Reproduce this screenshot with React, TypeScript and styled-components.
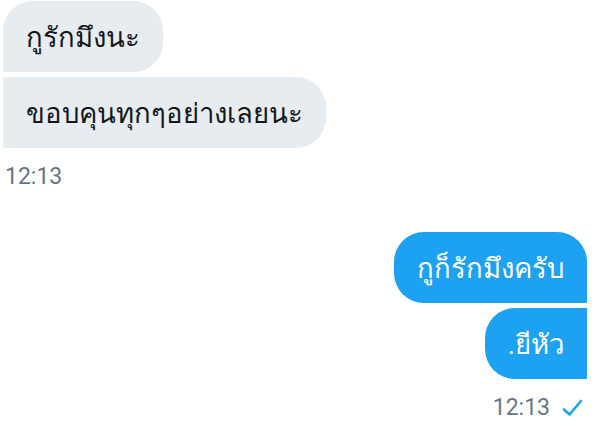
import React from "react";
import styled, { createGlobalStyle } from "styled-components";

const Global = createGlobalStyle`
  html, body { margin: 0; padding: 0; background: #ffffff; }
  body { font-family: Roboto, "Noto Sans", "DejaVu Sans", sans-serif; }
`;

const Page = styled.div`
  width: 611px;
  height: 447px;
  box-sizing: border-box;
  padding: 1px 24px 0 3px;
  display: flex;
  flex-direction: column;
`;

const Group = styled.div<{ $mine?: boolean }>`
  display: flex;
  flex-direction: column;
  align-items: ${(p) => (p.$mine ? "flex-end" : "flex-start")};
  gap: 5px;
  margin-top: ${(p) => (p.$mine ? "42px" : "0")};
`;

type Pos = "first" | "last";

const Bubble = styled.div<{ $mine?: boolean; $pos: Pos }>`
  box-sizing: border-box;
  height: 71px;
  display: flex;
  align-items: center;
  padding: 0 23px;
  font-size: 27.5px;
  color: ${(p) => (p.$mine ? "#ffffff" : "#14171a")};
  background: ${(p) => (p.$mine ? "#1da1f2" : "#e6ecf0")};
  border-radius: ${(p) =>
    p.$mine
      ? p.$pos === "first"
        ? "30px 30px 0 30px"
        : "30px 0 0 30px"
      : p.$pos === "first"
      ? "30px 30px 30px 0"
      : "0 30px 30px 0"};
  white-space: nowrap;
`;

const Meta = styled.div<{ $mine?: boolean }>`
  display: flex;
  align-items: center;
  gap: 12px;
  margin-top: 10px;
  font-family: Roboto, sans-serif;
  font-size: 23px;
  color: #657786;
  padding-left: ${(p) => (p.$mine ? "0" : "2px")};
  padding-right: ${(p) => (p.$mine ? "4px" : "0")};
`;

const Check = () => (
  <svg width="21" height="18" viewBox="0 0 21 18" fill="none">
    <path d="M2 10.5 L7.5 15.5 L19 2" stroke="#1da1f2" strokeWidth="2.6" strokeLinecap="round" strokeLinejoin="round" />
  </svg>
);

export default function App() {
  return (
    <Page>
      <Global />
      <Group>
        <Bubble $pos="first">กูรักมึงนะ</Bubble>
        <Bubble $pos="last">ขอบคุนทุกๆอย่างเลยนะ</Bubble>
        <Meta>12:13</Meta>
      </Group>
      <Group $mine>
        <Bubble $mine $pos="first">กูก็รักมึงครับ</Bubble>
        <Bubble $mine $pos="last">.ยีหัว</Bubble>
        <Meta $mine>
          12:13
          <Check />
        </Meta>
      </Group>
    </Page>
  );
}
